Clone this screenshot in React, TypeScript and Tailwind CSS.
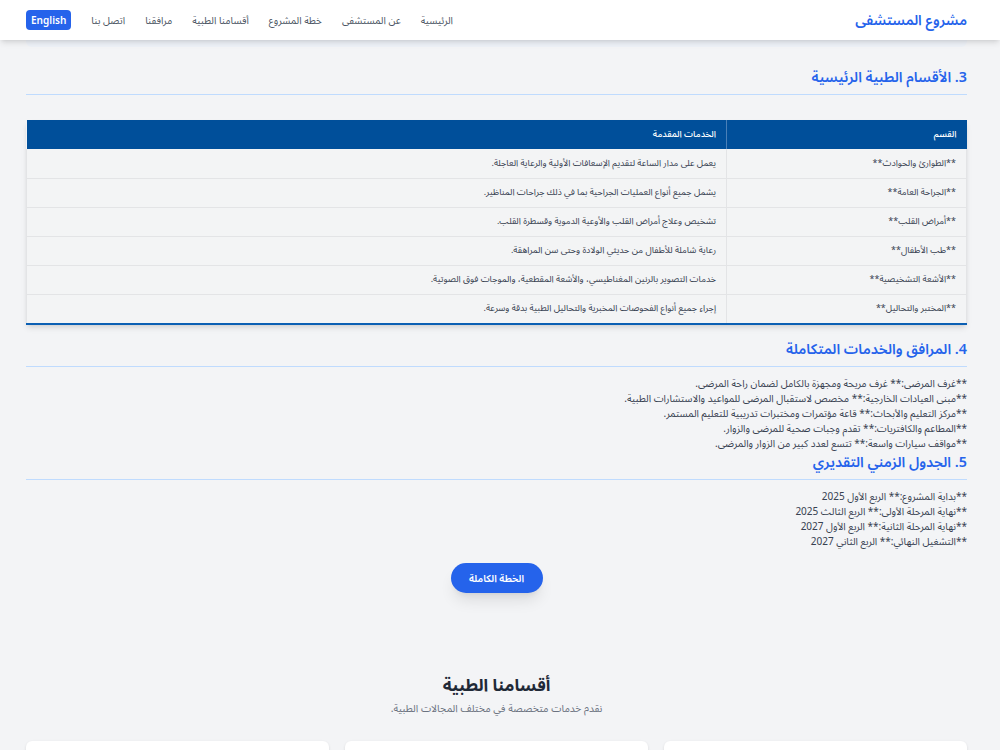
const navLinks = ['الرئيسية', 'عن المستشفى', 'خطة المشروع', 'أقسامنا الطبية', 'مرافقنا', 'اتصل بنا']

const departments = [
  ['**الطوارئ والحوادث**', 'يعمل على مدار الساعة لتقديم الإسعافات الأولية والرعاية العاجلة.'],
  ['**الجراحة العامة**', 'يشمل جميع أنواع العمليات الجراحية بما في ذلك جراحات المناظير.'],
  ['**أمراض القلب**', 'تشخيص وعلاج أمراض القلب والأوعية الدموية وقسطرة القلب.'],
  ['**طب الأطفال**', 'رعاية شاملة للأطفال من حديثي الولادة وحتى سن المراهقة.'],
  ['**الأشعة التشخيصية**', 'خدمات التصوير بالرنين المغناطيسي، والأشعة المقطعية، والموجات فوق الصوتية.'],
  ['**المختبر والتحاليل**', 'إجراء جميع أنواع الفحوصات المخبرية والتحاليل الطبية بدقة وسرعة.'],
]

const facilities = [
  '**غرف المرضى:** غرف مريحة ومجهزة بالكامل لضمان راحة المرضى.',
  '**مبنى العيادات الخارجية:** مخصص لاستقبال المرضى للمواعيد والاستشارات الطبية.',
  '**مركز التعليم والأبحاث:** قاعة مؤتمرات ومختبرات تدريبية للتعليم المستمر.',
  '**المطاعم والكافتريات:** تقدم وجبات صحية للمرضى والزوار.',
  '**مواقف سيارات واسعة:** تتسع لعدد كبير من الزوار والمرضى.',
]

const timeline = [
  '**بداية المشروع:** الربع الأول 2025',
  '**نهاية المرحلة الأولى:** الربع الثالث 2025',
  '**نهاية المرحلة الثانية:** الربع الأول 2027',
  '**التشغيل النهائي:** الربع الثاني 2027',
]

function SectionTitle({ children, className }: { children: string; className?: string }) {
  return (
    <h2 className={`text-[14.3px] leading-7 font-semibold text-[#2563eb] border-b border-[#bfdbfe] pb-0.5 ${className ?? ''}`}>
      {children}
    </h2>
  )
}

export default function App() {
  return (
    <div
      dir="rtl"
      className="min-h-screen w-[1000px] bg-[#f3f4f6] text-[#1f2937] overflow-hidden"
      style={{ fontFamily: '"Noto Sans Arabic", Inter, "Noto Sans", "DejaVu Sans", sans-serif' }}
    >
      <header className="bg-white shadow-md relative z-10">
        <div className="w-full pr-[33px] pl-[26px] h-10 flex items-center justify-between">
          <div className="text-[14px] font-semibold text-[#2563eb]">مشروع المستشفى</div>
          <nav className="flex items-center gap-[20px] text-[10px] text-[#4b5563]">
            {navLinks.map((l) => (
              <a key={l} className="whitespace-nowrap">{l}</a>
            ))}
            <button className="bg-[#2563eb] text-white text-[10px] font-semibold rounded px-[5px] h-5" dir="ltr">
              English
            </button>
          </nav>
        </div>
      </header>

      <main className="w-full pr-[33px] pl-[26px]">
        <div className="h-[7px] bg-[#eef2f8] rounded-b-md" />

        <SectionTitle className="mt-[17px]">3. الأقسام الطبية الرئيسية</SectionTitle>

        <div className="mt-[25px] shadow-md border-b-2 border-[#0b5fb3]">
          <table className="w-full border-collapse text-[9px]">
            <thead>
              <tr className="bg-[#004f9a] text-white h-[29px]">
                <th className="text-right font-medium px-[10px] w-[240px] border-l border-[#4a80b8]">القسم</th>
                <th className="text-right font-medium px-[10px]">الخدمات المقدمة</th>
              </tr>
            </thead>
            <tbody>
              {departments.map(([d, s]) => (
                <tr key={d} className="bg-[#f3f4f5] h-[29px] border-b border-[#e3e4e6] last:border-b-0">
                  <td className="px-[10px] text-[#374151] border-l border-r border-[#e3e4e6]">{d}</td>
                  <td className="px-[10px] text-[#374151] border-l border-[#e3e4e6]">{s}</td>
                </tr>
              ))}
            </tbody>
          </table>
        </div>

        <SectionTitle className="mt-[11px]">4. المرافق والخدمات المتكاملة</SectionTitle>
        <ul className="mt-[9px] text-[10px] leading-[15px] text-[#374151]">
          {facilities.map((f) => (
            <li key={f}>{f}</li>
          ))}
        </ul>

        <SectionTitle className="mt-[-2px]">5. الجدول الزمني التقديري</SectionTitle>
        <ul className="mt-[9px] text-[10px] leading-[15px] text-[#374151]">
          {timeline.map((t) => (
            <li key={t}>{t}</li>
          ))}
        </ul>

        <div className="flex justify-center mt-[14px]">
          <button className="w-[92px] h-[30px] rounded-full bg-[#2563eb] text-white text-[10px] font-semibold shadow-lg">
            الخطة الكاملة
          </button>
        </div>

        <section className="mt-[79px] text-center">
          <h2 className="text-[17px] leading-7 font-bold text-[#1f2937]">أقسامنا الطبية</h2>
          <p className="mt-[2px] text-[10.3px] text-[#6b7280]">نقدم خدمات متخصصة في مختلف المجالات الطبية.</p>
          <div className="grid grid-cols-3 gap-4 mt-[24px]">
            <div className="h-[120px] bg-white rounded-md shadow-sm" />
            <div className="h-[120px] bg-white rounded-md shadow-sm" />
            <div className="h-[120px] bg-white rounded-md shadow-sm" />
          </div>
        </section>
      </main>
    </div>
  )
}
